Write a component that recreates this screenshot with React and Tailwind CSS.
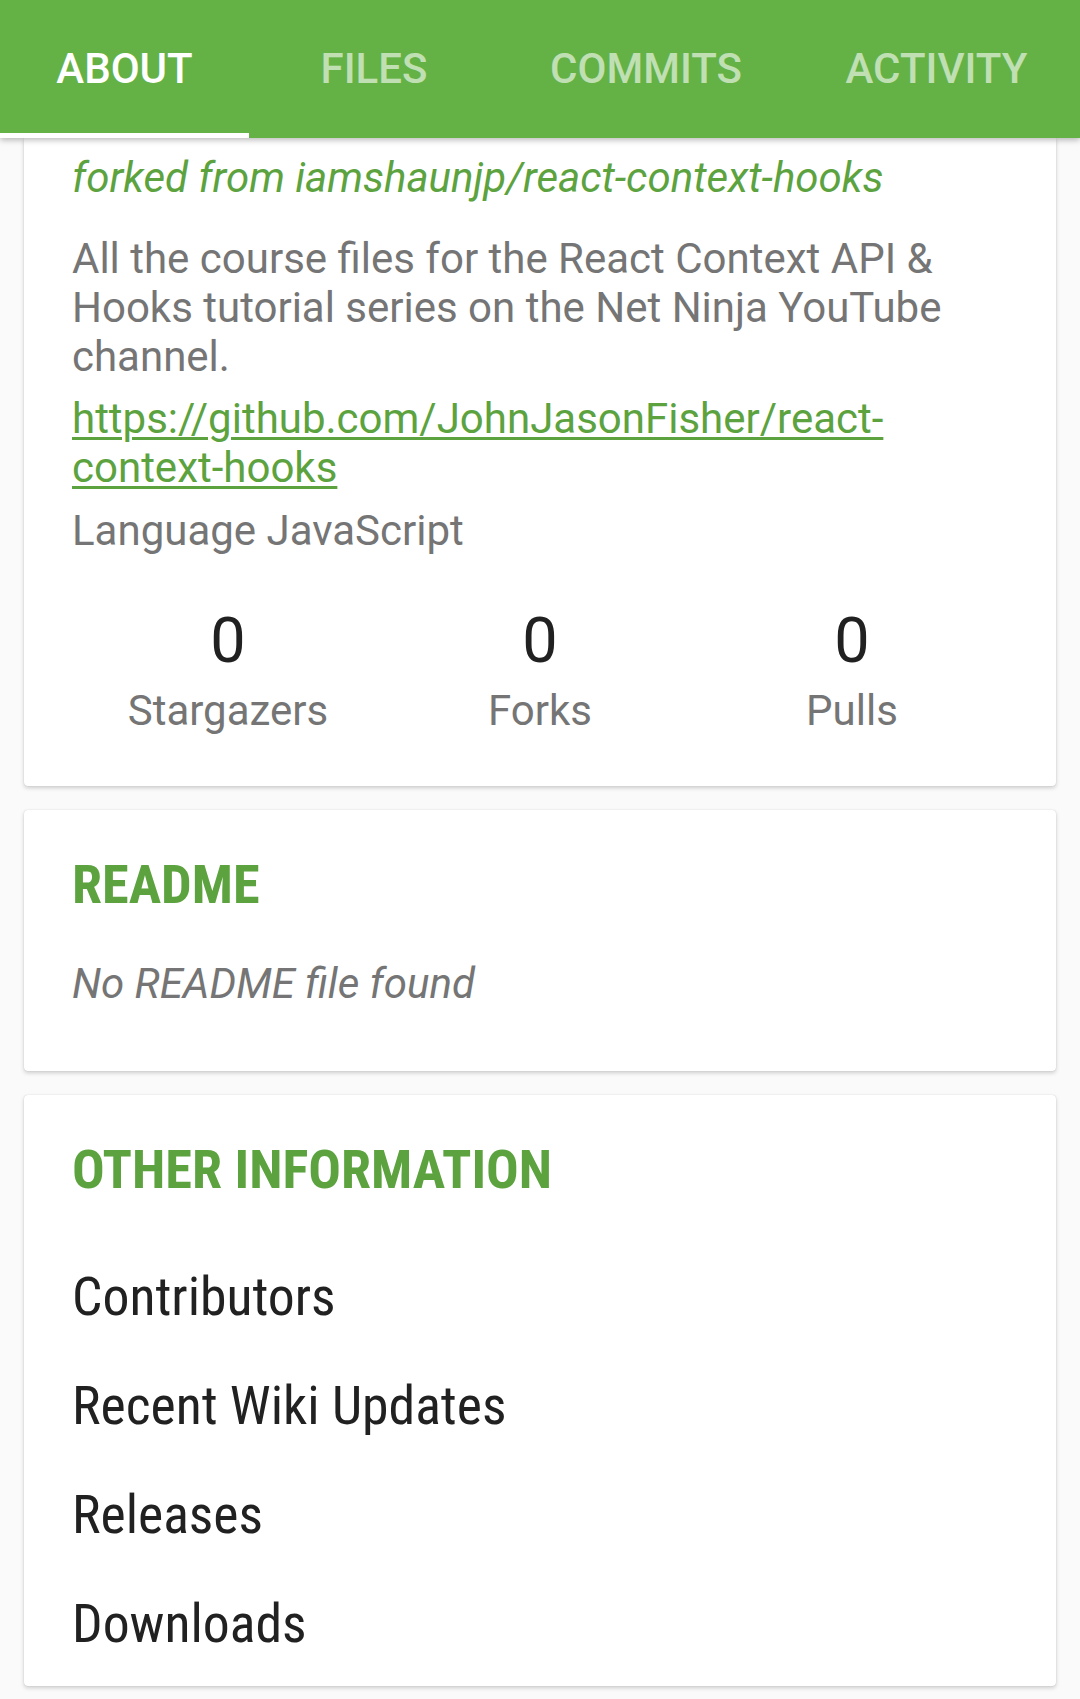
import React from 'react';

const tabs = [
  { label: 'ABOUT', width: 'w-[249px]', active: true },
  { label: 'FILES', width: 'w-[250px]' },
  { label: 'COMMITS', width: 'w-[294px]' },
  { label: 'ACTIVITY', width: 'w-[287px]' },
];

const stats = [
  { value: 0, label: 'Stargazers' },
  { value: 0, label: 'Forks' },
  { value: 0, label: 'Pulls' },
];

const otherInfo = ['Contributors', 'Recent Wiki Updates', 'Releases', 'Downloads'];

const condensed = "[font-family:'Roboto_Condensed',Roboto,sans-serif] [font-stretch:condensed]";

const Card = ({ className = '', children }) => (
  <div className={`mx-6 bg-white shadow-[0_2px_4px_rgba(0,0,0,0.18),0_0_1px_rgba(0,0,0,0.2)] ${className}`}>
    {children}
  </div>
);

const App = () => {
  return (
    <div className="min-h-[1699px] w-[1080px] bg-[#fafafa] pb-[13px] font-['Roboto',sans-serif]">
      {/* tab bar */}
      <div className="relative z-10 flex h-[138px] bg-[#64b246] shadow-[0_2px_6px_rgba(0,0,0,0.28)]">
        {tabs.map((tab) => (
          <div key={tab.label} className={`relative flex h-full shrink-0 items-center justify-center ${tab.width}`}>
            <span className={`text-[42px] font-medium leading-none ${tab.active ? 'text-white' : 'text-white/60'}`}>
              {tab.label}
            </span>
            {tab.active && <div className="absolute bottom-0 left-0 h-[5px] w-full bg-white" />}
          </div>
        ))}
      </div>

      {/* about card (scrolled, top hidden under the bar) */}
      <Card className="rounded-b px-12 pt-[15px] pb-[51px]">
        <p className="text-[42px] italic leading-[49px] text-[#5ca33f]">
          forked from iamshaunjp/react-context-hooks
        </p>
        <p className="mt-8 text-[42px] leading-[49px] text-[#757575]">
          All the course files for the React Context API &amp; Hooks tutorial series on the Net Ninja YouTube channel.
        </p>
        <a
          href="#"
          className="mt-[13px] block text-[42px] leading-[49px] text-[#5ca33f] underline decoration-[3px] underline-offset-[4px]"
        >
          https://github.com/JohnJasonFisher/react-context-hooks
        </a>
        <p className="mt-[14px] text-[42px] leading-[49px] text-[#757575]">Language JavaScript</p>

        <div className="mt-[49px] grid grid-cols-3">
          {stats.map((s) => (
            <div key={s.label} className="flex flex-col items-center">
              <span className="text-[63px] leading-[74px] text-[#212121]">{s.value}</span>
              <span className="mt-2 text-[42px] leading-[49px] text-[#757575]">{s.label}</span>
            </div>
          ))}
        </div>
      </Card>

      {/* readme */}
      <Card className="mt-6 rounded px-12 pt-[43px] pb-[63px]">
        <h2 className={`text-[54.3px] font-bold leading-[63px] text-[#5ca33f] ${condensed}`}>README</h2>
        <p className="mt-[43px] text-[42px] italic leading-[49px] text-[#757575]">No README file found</p>
      </Card>

      {/* other information */}
      <Card className="mt-6 rounded px-12 pt-[43px] pb-2">
        <h2 className={`text-[54.3px] font-bold leading-[63px] text-[#5ca33f] ${condensed}`}>OTHER INFORMATION</h2>
        <ul className="mt-[41px]">
          {otherInfo.map((item) => (
            <li key={item} className={`py-6 text-[53.7px] leading-[61px] text-[#212121] ${condensed}`}>
              {item}
            </li>
          ))}
        </ul>
      </Card>
    </div>
  );
};

export default App;
